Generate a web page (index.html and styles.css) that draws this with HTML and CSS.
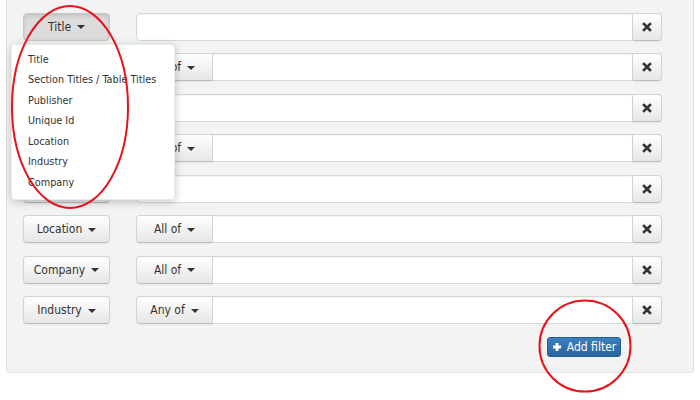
FILE: index.html
```html
<!DOCTYPE html>
<html>
<head>
<meta charset="utf-8">
<link rel="stylesheet" href="styles.css">
</head>
<body>
<div class="page">
  <div class="panel">
    <div class="row">
      <div class="field-wrap">
        <button class="btn field active">Title <span class="caret"></span></button>
        <ul class="menu">
          <li>Title</li>
          <li>Section Titles / Table Titles</li>
          <li>Publisher</li>
          <li>Unique Id</li>
          <li>Location</li>
          <li>Industry</li>
          <li>Company</li>
        </ul>
      </div>
      <div class="group">
        <input class="input" type="text">
        <button class="btn remove"><svg width="10" height="10" viewBox="0 0 10 10"><path d="M2 2 L8 8 M8 2 L2 8" stroke="#333" stroke-width="2.6" stroke-linecap="square"/></svg></button>
      </div>
    </div>
    <div class="row">
      <button class="btn field"><span class="caret"></span></button>
      <div class="group">
        <button class="btn mode">All of <span class="caret"></span></button>
        <input class="input" type="text">
        <button class="btn remove"><svg width="10" height="10" viewBox="0 0 10 10"><path d="M2 2 L8 8 M8 2 L2 8" stroke="#333" stroke-width="2.6" stroke-linecap="square"/></svg></button>
      </div>
    </div>
    <div class="row">
      <button class="btn field"><span class="caret"></span></button>
      <div class="group">
        <input class="input" type="text">
        <button class="btn remove"><svg width="10" height="10" viewBox="0 0 10 10"><path d="M2 2 L8 8 M8 2 L2 8" stroke="#333" stroke-width="2.6" stroke-linecap="square"/></svg></button>
      </div>
    </div>
    <div class="row">
      <button class="btn field"><span class="caret"></span></button>
      <div class="group">
        <button class="btn mode">All of <span class="caret"></span></button>
        <input class="input" type="text">
        <button class="btn remove"><svg width="10" height="10" viewBox="0 0 10 10"><path d="M2 2 L8 8 M8 2 L2 8" stroke="#333" stroke-width="2.6" stroke-linecap="square"/></svg></button>
      </div>
    </div>
    <div class="row">
      <button class="btn field"><span class="caret"></span></button>
      <div class="group">
        <input class="input" type="text">
        <button class="btn remove"><svg width="10" height="10" viewBox="0 0 10 10"><path d="M2 2 L8 8 M8 2 L2 8" stroke="#333" stroke-width="2.6" stroke-linecap="square"/></svg></button>
      </div>
    </div>
    <div class="row">
      <button class="btn field">Location <span class="caret"></span></button>
      <div class="group">
        <button class="btn mode">All of <span class="caret"></span></button>
        <input class="input" type="text">
        <button class="btn remove"><svg width="10" height="10" viewBox="0 0 10 10"><path d="M2 2 L8 8 M8 2 L2 8" stroke="#333" stroke-width="2.6" stroke-linecap="square"/></svg></button>
      </div>
    </div>
    <div class="row">
      <button class="btn field">Company <span class="caret"></span></button>
      <div class="group">
        <button class="btn mode">All of <span class="caret"></span></button>
        <input class="input" type="text">
        <button class="btn remove"><svg width="10" height="10" viewBox="0 0 10 10"><path d="M2 2 L8 8 M8 2 L2 8" stroke="#333" stroke-width="2.6" stroke-linecap="square"/></svg></button>
      </div>
    </div>
    <div class="row">
      <button class="btn field">Industry <span class="caret"></span></button>
      <div class="group">
        <button class="btn mode">Any of <span class="caret"></span></button>
        <input class="input" type="text">
        <button class="btn remove"><svg width="10" height="10" viewBox="0 0 10 10"><path d="M2 2 L8 8 M8 2 L2 8" stroke="#333" stroke-width="2.6" stroke-linecap="square"/></svg></button>
      </div>
    </div>
    <div class="actions">
      <button class="btn-primary"><svg width="10" height="10" viewBox="0 0 10 10"><path d="M5 1 V9 M1 5 H9" stroke="#fff" stroke-width="2.8"/></svg>Add filter</button>
    </div>
  </div>
  <svg class="marks" width="700" height="400" viewBox="0 0 700 400">
    <ellipse cx="70" cy="107" rx="58" ry="101" fill="none" stroke="#e8141b" stroke-width="2"/>
    <circle cx="585" cy="346" r="45.5" fill="none" stroke="#e8141b" stroke-width="2"/>
  </svg>
</div>
</body>
</html>
```

FILE: styles.css
```css
* { box-sizing: border-box; }
html, body { margin: 0; padding: 0; background: #fff; }
body {
  font-family: "DejaVu Sans Condensed", "Liberation Sans", sans-serif;
  color: #333;
  width: 700px;
  height: 400px;
  overflow: hidden;
}
.page { position: relative; width: 700px; height: 400px; padding: 0 6px; }
.panel {
  height: 373px;
  background: #f3f3f3;
  border: 1px solid #e2e2e2;
  border-top: none;
  border-radius: 0 0 4px 4px;
  padding: 12.5px 0 0 16px;
}
.row {
  display: flex;
  gap: 26px;
  height: 28px;
  margin-bottom: 12.5px;
}
.field-wrap { position: relative; }
.btn {
  font-family: inherit;
  font-size: 12px;
  color: #333;
  height: 28px;
  padding: 0;
  border: 1px solid #d3d3d3;
  border-bottom-color: #bdbdbd;
  border-radius: 4px;
  background: linear-gradient(#ffffff, #e6e6e6);
  box-shadow: inset 0 1px 0 rgba(255,255,255,.4), 0 1px 2px rgba(0,0,0,.06);
  display: flex;
  align-items: center;
  justify-content: center;
  gap: 6px;
}
.field { width: 87px; }
.field.active {
  background: #dcdcdc;
  border-color: #c6c6c6;
  box-shadow: inset 0 2px 4px rgba(0,0,0,.12);
}
.caret {
  display: inline-block;
  width: 0; height: 0;
  border-top: 4px solid #333;
  border-left: 4px solid transparent;
  border-right: 4px solid transparent;
  margin-top: 1px;
}
.group { display: flex; width: 526px; height: 28px; }
.mode { width: 77px; border-radius: 4px 0 0 4px; flex: none; }
.input {
  flex: 1;
  min-width: 0;
  height: 28px;
  margin: 0;
  border: 1px solid #d6d6d6;
  background: #fff;
  border-radius: 4px 0 0 4px;
  box-shadow: inset 0 1px 1px rgba(0,0,0,.05);
}
.mode + .input { border-radius: 0; border-left: none; }
.remove { width: 29px; flex: none; border-radius: 0 4px 4px 0; border-left: none; }
.menu {
  position: absolute;
  left: -12px;
  top: 31px;
  width: 164px;
  margin: 0;
  padding: 5px 0;
  list-style: none;
  background: #fff;
  border-radius: 4px;
  box-shadow: 0 2px 8px rgba(0,0,0,.22);
  border: 1px solid rgba(0,0,0,.08);
  z-index: 5;
}
.menu li {
  font-size: 10.8px;
  line-height: 20.6px;
  height: 20.6px;
  padding-left: 16px;
  white-space: nowrap;
  color: #333;
}
.actions { display: flex; justify-content: flex-end; padding-right: 72px; }
.btn-primary {
  font-family: inherit;
  font-size: 12px;
  color: #fff;
  height: 20px;
  width: 74px;
  padding: 0;
  border: 1px solid #245e92;
  border-radius: 3px;
  background: linear-gradient(#3a7fbd, #2a65a0);
  display: flex;
  align-items: center;
  justify-content: center;
  gap: 5px;
}
.marks { position: absolute; left: 0; top: 0; pointer-events: none; z-index: 10; }
```
